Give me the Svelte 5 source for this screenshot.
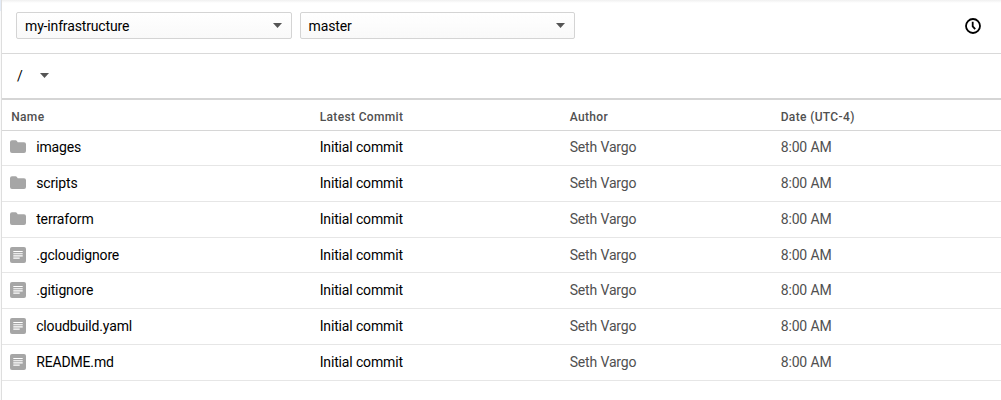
<script>
  const selects = ['my-infrastructure', 'master'];
  const columns = ['Name', 'Latest Commit', 'Author', 'Date (UTC-4)'];
  const files = [
    { name: 'images', folder: true },
    { name: 'scripts', folder: true },
    { name: 'terraform', folder: true },
    { name: '.gcloudignore', folder: false },
    { name: '.gitignore', folder: false },
    { name: 'cloudbuild.yaml', folder: false },
    { name: 'README.md', folder: false }
  ];
</script>

<div class="page">
  <div class="edge"></div>
  <main>
    <header class="toolbar">
      {#each selects as label}
        <button class="select">
          <span>{label}</span>
          <svg class="caret" width="9" height="5" viewBox="0 0 9 5"><path d="M0 0h9L4.5 5z" /></svg>
        </button>
      {/each}
      <svg class="clock" width="18" height="18" viewBox="0 0 18 18">
        <circle cx="9" cy="9" r="7" />
        <path d="M8.7 4.8V9.3L11.2 12.2" />
      </svg>
    </header>
    <nav class="path">
      <span>/</span>
      <svg class="caret" width="9" height="5" viewBox="0 0 9 5"><path d="M0 0h9L4.5 5z" /></svg>
    </nav>
    <div class="row head">
      {#each columns as column}<span>{column}</span>{/each}
    </div>
    {#each files as file}
      <div class="row">
        <span class="name">
          {#if file.folder}
            <svg class="icon" width="16" height="16" viewBox="0 0 16 16">
              <path d="M2 1.2H5.6Q6.4 1.2 6.9 2L7.7 3.2H14A2 2 0 0 1 16 5.2v6.8a2 2 0 0 1-2 2H2a2 2 0 0 1-2-2V3.2a2 2 0 0 1 2-2z" />
            </svg>
          {:else}
            <svg class="icon" width="16" height="16" viewBox="0 0 16 16">
              <rect width="16" height="16" rx="2" />
              <path class="lines" d="M3.3 4.5h9.4M3.3 6.7h9.4M3.3 8.9h9.4M3.3 11.1h6.4" />
            </svg>
          {/if}
          {file.name}
        </span>
        <span>Initial commit</span>
        <span class="muted">Seth Vargo</span>
        <span class="muted">8:00 AM</span>
      </div>
    {/each}
  </main>
</div>

<style>
  .page {
    display: flex;
    height: 400px;
    overflow: hidden;
    background: #fff;
    color: #000;
    font: 14px/20px Roboto, sans-serif;
    letter-spacing: -0.15px;
  }
  .edge {
    box-sizing: border-box;
    flex: none;
    width: 2px;
    border-right: 1px solid #dedede;
    background: linear-gradient(#e4ecf8 11px, #fafafa 11px);
  }
  main {
    flex: 1;
    min-width: 0;
  }
  .toolbar {
    box-sizing: border-box;
    display: flex;
    align-items: center;
    gap: 8px;
    height: 53.5px;
    padding: 0 19px 1px 14px;
    border-bottom: 1px solid #d9d9d9;
    background: linear-gradient(#f0f0f0, #fff 3px);
  }
  .select {
    box-sizing: border-box;
    display: flex;
    align-items: center;
    justify-content: space-between;
    width: 275.6px;
    height: 27px;
    padding: 0 9px 0 8px;
    border: 1px solid #d4d4d4;
    border-radius: 2px;
    background: linear-gradient(#fff, #f9f9f9);
    color: #000;
    font: inherit;
    letter-spacing: inherit;
  }
  .caret {
    display: block;
    fill: #555;
  }
  .clock {
    margin-left: auto;
    fill: none;
    stroke: #000;
    stroke-width: 1.8;
  }
  .path {
    box-sizing: border-box;
    display: flex;
    align-items: center;
    gap: 17px;
    height: 46.5px;
    padding-left: 15px;
    border-bottom: 2px solid #d5d5d5;
  }
  .row {
    box-sizing: border-box;
    display: grid;
    grid-template-columns: 308.5px 250px 211px 1fr;
    align-items: center;
    height: 35.72px;
    padding: 0 0 1px 9.2px;
    border-bottom: 1px solid #e6e6e6;
  }
  .head {
    height: 30.6px;
    padding-top: 4px;
    padding-bottom: 0;
    border-bottom-color: #d6d6d6;
    color: #505050;
    font-size: 12px;
    font-weight: 500;
    letter-spacing: 0.35px;
  }
  .name {
    display: flex;
    align-items: center;
    gap: 10px;
    margin-left: -1px;
  }
  .icon {
    flex: none;
    fill: #a6a6a6;
  }
  .lines {
    fill: none;
    stroke: #fff;
    stroke-width: 1.1;
  }
  .muted {
    color: #505050;
  }
</style>
